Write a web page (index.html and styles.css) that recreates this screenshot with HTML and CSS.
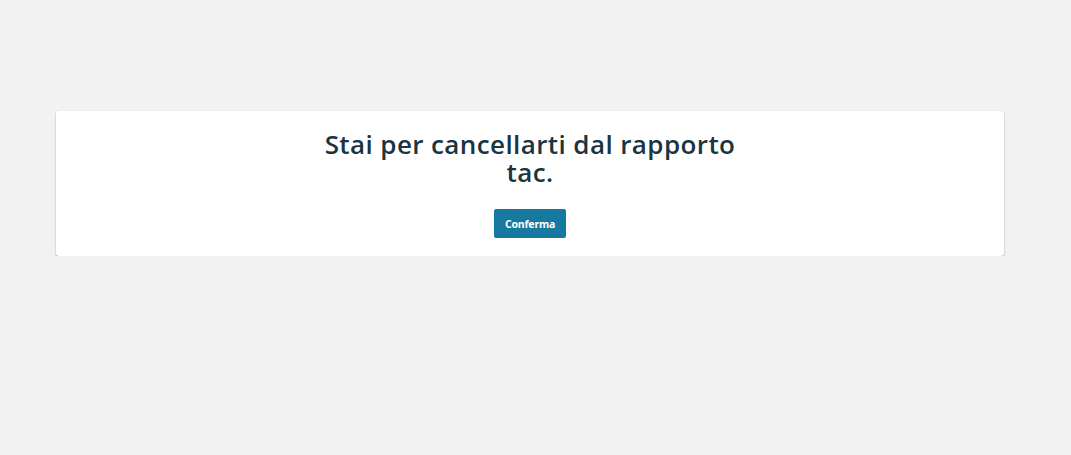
FILE: index.html
```html
<!DOCTYPE html>
<html lang="it">
<head>
    <meta charset="UTF-8">
    <title>Cancellazione</title>
    <link rel="stylesheet" href="styles.css">
</head>
<body>
    <div class="page">
        <div class="card">
            <h1 class="title">Stai per cancellarti dal rapporto tac.</h1>
            <button class="confirm">Conferma</button>
        </div>
    </div>
</body>
</html>
```

FILE: styles.css
```css
body {
    margin: 0;
    background: #f2f2f2;
    font-family: 'Open Sans', sans-serif;
}

.page {
    padding: 111px 0 0 56px;
}

.card {
    width: 948px;
    background: #fff;
    border-radius: 3px;
    box-shadow: 0 1px 2px rgba(0, 0, 0, 0.35);
    text-align: center;
    padding: 19px 0 18px;
    box-sizing: border-box;
}

.title {
    max-width: 440px;
    margin: 0 auto 23px;
    font-size: 26px;
    line-height: 28px;
    font-weight: 600;
    letter-spacing: 0.4px;
    color: #1a3540;
}

.confirm {
    height: 29px;
    padding: 0 11px;
    background: #17799f;
    color: #fff;
    border: none;
    border-radius: 2px;
    font-family: 'Noto Sans', sans-serif;
    font-size: 10.5px;
    font-weight: 700;
    letter-spacing: -0.2px;
}
```
